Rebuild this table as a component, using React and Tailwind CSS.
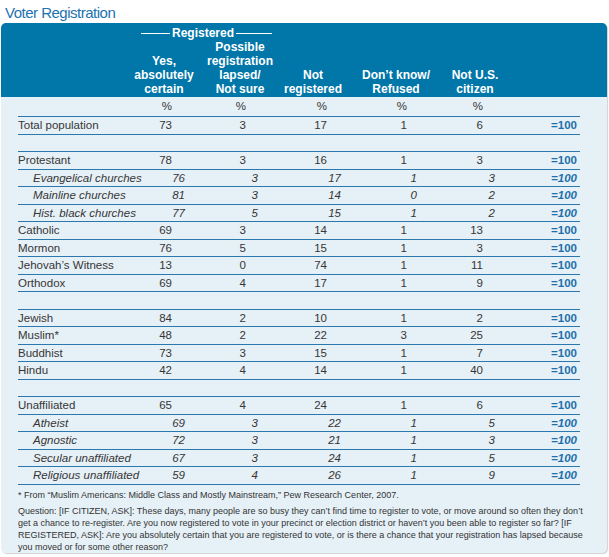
import React from "react";

const rows = [
  { l: "Total population", v: ["73", "3", "17", "1", "6"] },
  { s: true },
  { l: "Protestant", v: ["78", "3", "16", "1", "3"] },
  { l: "Evangelical churches", v: ["76", "3", "17", "1", "3"], i: true },
  { l: "Mainline churches", v: ["81", "3", "14", "0", "2"], i: true },
  { l: "Hist. black churches", v: ["77", "5", "15", "1", "2"], i: true },
  { l: "Catholic", v: ["69", "3", "14", "1", "13"] },
  { l: "Mormon", v: ["76", "5", "15", "1", "3"] },
  { l: "Jehovah\u2019s Witness", v: ["13", "0", "74", "1", "11"] },
  { l: "Orthodox", v: ["69", "4", "17", "1", "9"] },
  { s: true },
  { l: "Jewish", v: ["84", "2", "10", "1", "2"] },
  { l: "Muslim*", v: ["48", "2", "22", "3", "25"] },
  { l: "Buddhist", v: ["73", "3", "15", "1", "7"] },
  { l: "Hindu", v: ["42", "4", "14", "1", "40"] },
  { s: true },
  { l: "Unaffiliated", v: ["65", "4", "24", "1", "6"] },
  { l: "Atheist", v: ["69", "3", "22", "1", "5"], i: true },
  { l: "Agnostic", v: ["72", "3", "21", "1", "3"], i: true },
  { l: "Secular unaffiliated", v: ["67", "3", "24", "1", "5"], i: true },
  { l: "Religious unaffiliated", v: ["59", "4", "26", "1", "9"], i: true },
];

const cellW = ["w-[37px]", "w-[73px]", "w-[83px]", "w-[76px]", "w-[78px]"];
const padN = ["pr-[13px]", "pr-[12px]", "pr-[14px]", "pr-[10px]", "pr-[12px]"];

function Row({ r }) {
  if (r.s) {
    return <div className="h-[17.5px] border-b border-[#2a78ad]" />;
  }
  return (
    <div
      className={
        "h-[17.5px] border-b border-[#2a78ad] flex items-center leading-[16.5px] text-[#363636] " +
        (r.i ? "italic" : "")
      }
    >
      <div className={"w-[130px] whitespace-nowrap " + (r.i ? "pl-[15px]" : "")}>{r.l}</div>
      {r.v.map((x, k) => (
        <div key={k} className={cellW[k] + " text-right " + (r.i ? "" : padN[k])}>
          {x}
        </div>
      ))}
      <div className="w-[82px] text-right font-bold text-[#1f6fab]">=100</div>
    </div>
  );
}

export default function App() {
  return (
    <div className="w-[609px] h-[557px] bg-white font-['Liberation_Sans',Arial,sans-serif] text-[11.5px]">
      <div className="h-[23px] pl-[5px] pt-[4px] text-[15px] leading-[17px] tracking-[-0.5px] text-[#1d72b0]">
        Voter Registration
      </div>
      <div className="ml-[1px] w-[606px] h-[530px] rounded-[5px] bg-[#e6f0f7] overflow-hidden shadow-[1px_1px_1px_rgba(0,0,0,0.18)]">
        {/* blue header */}
        <div className="h-[74px] bg-[#0076a9] text-white font-bold text-[12px] pl-[17px] flex flex-col">
          <div className="mt-[3px] h-[14px] leading-[14px] ml-[123px] flex items-center">
            <div className="w-[29px] h-px bg-white" />
            <div className="px-[2px]">Registered</div>
            <div className="w-[36px] h-px bg-white" />
          </div>
          <div className="flex-1 flex items-end pb-[1px] leading-[14px] text-center">
            <div className="w-[106px]" />
            <div className="w-[80px]">
              Yes,
              <br />
              absolutely
              <br />
              certain
            </div>
            <div className="w-[72px]">
              Possible
              <br />
              registration
              <br />
              lapsed/
              <br />
              Not sure
            </div>
            <div className="w-[74px]">
              Not
              <br />
              registered
            </div>
            <div className="w-[92px]">
              Don{"\u2019"}t know/
              <br />
              Refused
            </div>
            <div className="w-[66px]">
              Not U.S.
              <br />
              citizen
            </div>
          </div>
        </div>
        {/* table body */}
        <div className="ml-[17px] w-[562px]">
          <div className="h-[20px] border-b border-[#2a78ad] flex items-center leading-[19px] text-[#363636]">
            <div className="w-[130px]" />
            {cellW.map((w, k) => (
              <div key={k} className={w + " text-right " + padN[k]}>
                %
              </div>
            ))}
          </div>
          {rows.map((r, idx) => (
            <Row key={idx} r={r} />
          ))}
        </div>
        {/* footer */}
        <div className="pl-[17px] pt-[4px] text-[9px] leading-[12px] text-[#333]">
          <div className="whitespace-nowrap">
            * From {"\u201C"}Muslim Americans: Middle Class and Mostly Mainstream,{"\u201D"} Pew Research Center, 2007.
          </div>
          <div className="mt-[4px] whitespace-nowrap">
            Question: [IF CITIZEN, ASK]: These days, many people are so busy they can{"\u2019"}t find time to register to vote, or move around so often they don{"\u2019"}t
            <br />
            get a chance to re-register. Are you now registered to vote in your precinct or election district or haven{"\u2019"}t you been able to register so far? [IF
            <br />
            REGISTERED, ASK]: Are you absolutely certain that you are registered to vote, or is there a chance that your registration has lapsed because
            <br />
            you moved or for some other reason?
          </div>
        </div>
      </div>
    </div>
  );
}
